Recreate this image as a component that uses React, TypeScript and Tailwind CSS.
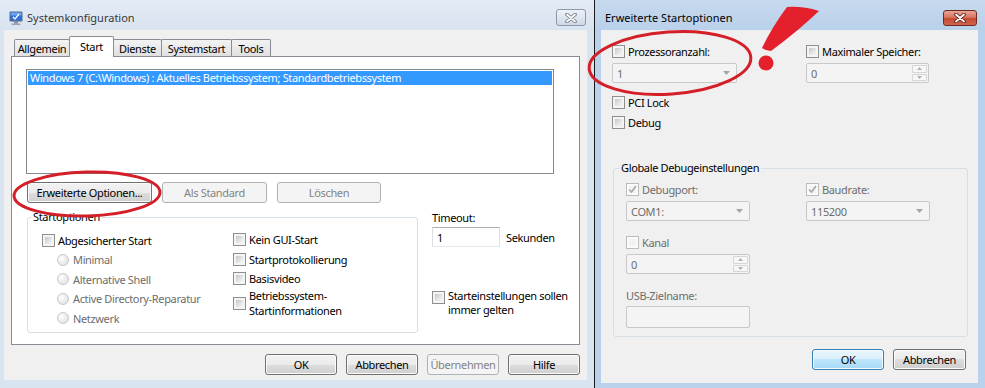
import React from "react";

type CheckProps = { checked?: boolean; disabled?: boolean };

function Check({ checked = false, disabled = false }: CheckProps) {
  return (
    <span
      className={`relative flex w-[13px] h-[13px] shrink-0 border p-[2px] ${
        disabled ? "border-[#bcbcbc] bg-[#fbfbfb]" : "border-[#8e8f8f] bg-[#f4f4f4]"
      }`}
    >
      <span
        className={`flex-1 ${
          disabled
            ? "bg-[#f2f2f2]"
            : "bg-[linear-gradient(135deg,#c3c6cb_0%,#dfe1e4_50%,#f6f6f6_100%)]"
        }`}
      />
      {checked && (
        <svg className="absolute left-[1px] top-[1px]" width="9" height="9" viewBox="0 0 9 9">
          <path d="M1 4.5 L3.5 7 L8 1" fill="none" stroke="#a8a8a8" strokeWidth="1.6" />
        </svg>
      )}
    </span>
  );
}

function Radio() {
  return (
    <span className="w-[12px] h-[12px] shrink-0 rounded-full border border-[#c7c7c7] bg-[radial-gradient(circle_at_35%_35%,#ffffff_0%,#eeeeee_45%,#dcdcdc_100%)]" />
  );
}

function Combo({ value, className }: { value: string; className: string }) {
  return (
    <div
      className={`${className} h-[20px] flex items-center border border-[#c9c9c9] rounded-[2px] bg-[#f4f4f4] pl-[4px] pr-[6px] text-[#6d6d6d]`}
    >
      <span className="flex-1">{value}</span>
      <svg width="7" height="4" viewBox="0 0 7 4">
        <path d="M0 0 H7 L3.5 4 Z" fill="#a6a6a6" />
      </svg>
    </div>
  );
}

function Spin({ value, className }: { value: string; className: string }) {
  return (
    <div
      className={`${className} h-[20px] flex items-center border border-[#c9c9c9] rounded-[2px] bg-[#f4f4f4] pl-[4px] pr-px py-px text-[#6d6d6d]`}
    >
      <span className="flex-1">{value}</span>
      <div className="w-[15px] h-full flex flex-col gap-px">
        <div className="flex-1 flex items-center justify-center border border-[#d6d6d6] rounded-[1px] bg-[#f7f7f7]">
          <svg width="5" height="3" viewBox="0 0 5 3">
            <path d="M0 3 H5 L2.5 0 Z" fill="#b0b0b0" />
          </svg>
        </div>
        <div className="flex-1 flex items-center justify-center border border-[#d6d6d6] rounded-[1px] bg-[#f7f7f7]">
          <svg width="5" height="3" viewBox="0 0 5 3">
            <path d="M0 0 H5 L2.5 3 Z" fill="#b0b0b0" />
          </svg>
        </div>
      </div>
    </div>
  );
}

const btnNormal =
  "flex items-center justify-center border border-[#707070] rounded-[3px] bg-[linear-gradient(#f2f2f2_0%,#ebebeb_50%,#dddddd_50%,#cfcfcf_100%)] shadow-[inset_0_0_0_1px_#fbfbfb] text-black";
const btnDisabled =
  "flex items-center justify-center border border-[#adb2b5] rounded-[3px] bg-[#f4f4f4] text-[#838383]";
const btnDefault =
  "flex items-center justify-center border border-[#3c7fb1] rounded-[3px] bg-[linear-gradient(#eaf6fd_0%,#d9f0fc_50%,#bee6fd_50%,#a7d9f5_100%)] shadow-[inset_0_0_0_1px_#f4fbff] text-black";

function CloseX({ active }: { active: boolean }) {
  return (
    <svg width="12" height="10" viewBox="0 0 12 10">
      <path
        d="M2 1.5 L10 8.5 M10 1.5 L2 8.5"
        stroke={active ? "#5a1f17" : "#6f7784"}
        strokeWidth="3.6"
        strokeLinecap="round"
      />
      <path
        d="M2 1.5 L10 8.5 M10 1.5 L2 8.5"
        stroke="#ffffff"
        strokeWidth="1.8"
        strokeLinecap="round"
      />
    </svg>
  );
}

function AppIcon() {
  return (
    <svg width="16" height="16" viewBox="0 0 16 16" className="shrink-0">
      <rect x="1.5" y="1.5" width="13" height="10" rx="1" fill="#5b6a7e" />
      <rect x="2.5" y="2.5" width="11" height="8" fill="#2f6fd6" />
      <rect x="2.5" y="2.5" width="11" height="3" fill="#6aa3f0" />
      <path d="M5 7 L7 9 L11 4" fill="none" stroke="#ffffff" strokeWidth="1.3" />
      <rect x="6" y="11.5" width="4" height="2" fill="#7c8797" />
      <rect x="3.5" y="13.5" width="9" height="1.5" fill="#9aa4b2" />
    </svg>
  );
}

function Tab({ label, selected, className }: { label: string; selected?: boolean; className: string }) {
  if (selected) {
    return (
      <div
        className={`${className} h-[21px] mb-[-1px] relative z-10 flex justify-center pt-[2px] border border-b-0 border-[#898c95] rounded-t-[2px] bg-white`}
      >
        {label}
      </div>
    );
  }
  return (
    <div
      className={`${className} h-[17px] flex items-center justify-center border border-b-0 border-[#898c95] rounded-t-[2px] bg-[linear-gradient(#f3f3f3,#e0e0e0)] -ml-px first:ml-0`}
    >
      {label}
    </div>
  );
}

function LeftWindow() {
  return (
    <div className="w-[594px] h-full flex flex-col bg-[#d9e4f1]">
      <div className="h-[30px] flex items-center pt-[5px] pl-[8px] pr-[8px] bg-[linear-gradient(#e3ebf5,#d9e4f1)] tracking-normal">
        <AppIcon />
        <span className="ml-[3px] text-[#383838]">Systemkonfiguration</span>
        <div className="ml-auto w-[30px] h-[17px] flex items-center justify-center border border-[#8d98a8] rounded-[3px] bg-[linear-gradient(#eef3f9_0%,#dde5ef_50%,#cfd9e5_100%)]">
          <CloseX active={false} />
        </div>
      </div>
      <div className="ml-[4px] mr-[7px] mb-[8px] flex-1 bg-[#f0f0f0] flex flex-col px-[7px] pt-[6px]">
        <div className="h-[20px] flex items-end pl-[3px]">
          <Tab label="Allgemein" className="w-[56px]" />
          <Tab label="Start" selected className="w-[45px] -ml-px" />
          <Tab label="Dienste" className="w-[49px]" />
          <Tab label="Systemstart" className="w-[71px]" />
          <Tab label="Tools" className="w-[40px]" />
        </div>
        <div className="h-[289px] border border-[#898c95] bg-white flex flex-col">
          <div className="ml-[14px] mt-[12px] w-[528px] h-[105px] border border-[#828790] bg-white p-px">
            <div className="h-[14px] leading-[14px] bg-[#3399ff] text-white pl-[2px] whitespace-nowrap">
              {"Windows 7 (C:\\Windows) : Aktuelles Betriebssystem; Standardbetriebssystem"}
            </div>
          </div>
          <div className="flex gap-[10px] ml-[15px] mt-[8px]">
            <div className={`${btnNormal} w-[125px] h-[21px]`}>Erweiterte Optionen...</div>
            <div className={`${btnDisabled} w-[105px] h-[21px]`}>Als Standard</div>
            <div className={`${btnDisabled} w-[104px] h-[21px]`}>Löschen</div>
          </div>
          <div className="flex mt-[7px] ml-[15px]">
            <fieldset className="w-[391px] border border-[#d5dfe5] rounded-[3px]">
              <legend className="ml-[3px] px-[2px] leading-[14px]">Startoptionen</legend>
              <div className="flex pl-[14px] pt-[6px] pb-[4px]">
                <div className="w-[191px] flex flex-col">
                  <div className="h-[20px] flex items-center gap-[3px]">
                    <Check />
                    <span>Abgesicherter Start</span>
                  </div>
                  <div className="h-[19px] flex items-center gap-[4px] pl-[15px] text-[#6d6d6d]">
                    <Radio />
                    <span>Minimal</span>
                  </div>
                  <div className="h-[20px] flex items-center gap-[4px] pl-[15px] text-[#6d6d6d]">
                    <Radio />
                    <span>Alternative Shell</span>
                  </div>
                  <div className="h-[19px] flex items-center gap-[4px] pl-[15px] text-[#6d6d6d]">
                    <Radio />
                    <span>Active Directory-Reparatur</span>
                  </div>
                  <div className="h-[20px] flex items-center gap-[4px] pl-[15px] text-[#6d6d6d]">
                    <Radio />
                    <span>Netzwerk</span>
                  </div>
                </div>
                <div className="flex flex-col">
                  <div className="h-[19px] flex items-center gap-[3px]">
                    <Check />
                    <span>Kein GUI-Start</span>
                  </div>
                  <div className="h-[20px] flex items-center gap-[3px]">
                    <Check />
                    <span>Startprotokollierung</span>
                  </div>
                  <div className="h-[19px] flex items-center gap-[3px]">
                    <Check />
                    <span>Basisvideo</span>
                  </div>
                  <div className="h-[30px] flex items-center gap-[3px]">
                    <Check />
                    <span>
                      Betriebssystem-
                      <br />
                      Startinformationen
                    </span>
                  </div>
                </div>
              </div>
            </fieldset>
            <div className="ml-[14px] flex flex-col">
              <span>Timeout:</span>
              <div className="mt-[2px] flex items-center">
                <div className="w-[68px] h-[20px] border border-[#abadb3] border-l-[#dbdfe6] border-r-[#dbdfe6] border-b-[#e3e9ef] bg-white flex items-center pl-[4px]">
                  1
                </div>
                <span className="ml-[6px]">Sekunden</span>
              </div>
              <div className="mt-[42px] flex items-start gap-[3px]">
                <span className="mt-[2px]">
                  <Check />
                </span>
                <span className="leading-[14px]">
                  Starteinstellungen sollen
                  <br />
                  immer gelten
                </span>
              </div>
            </div>
          </div>
        </div>
        <div className="flex justify-end gap-[9px] mt-[9px]">
          <div className={`${btnNormal} w-[72px] h-[21px]`}>OK</div>
          <div className={`${btnNormal} w-[72px] h-[21px]`}>Abbrechen</div>
          <div className={`${btnDisabled} w-[72px] h-[21px]`}>Übernehmen</div>
          <div className={`${btnNormal} w-[72px] h-[21px]`}>Hilfe</div>
        </div>
      </div>
    </div>
  );
}

function RightWindow() {
  return (
    <div className="flex-1 h-full flex flex-col bg-[#b9d1ea]">
      <div className="h-[30px] flex items-center pt-[5px] pl-[10px] pr-[8px] bg-[linear-gradient(#c6d9ee,#b9d1ea)] tracking-normal">
        <span className="text-black">Erweiterte Startoptionen</span>
        <div className="ml-auto w-[34px] h-[16px] flex items-center justify-center border border-[#6e2a22] rounded-[3px] bg-[linear-gradient(#e8a595_0%,#d9745f_45%,#c54a33_55%,#d0664c_100%)]">
          <CloseX active />
        </div>
      </div>
      <div className="ml-[6px] mr-[7px] mb-[5px] flex-1 bg-[#f0f0f0] flex flex-col pl-[11px] pt-[13px]">
        <div className="flex h-[16px] items-center">
          <div className="w-[194px] flex items-center gap-[3px]">
            <Check />
            <span>Prozessoranzahl:</span>
          </div>
          <div className="flex items-center gap-[3px]">
            <Check />
            <span>Maximaler Speicher:</span>
          </div>
        </div>
        <div className="flex mt-[4px]">
          <div className="w-[194px]">
            <Combo value="1" className="w-[125px]" />
          </div>
          <Spin value="0" className="w-[123px]" />
        </div>
        <div className="mt-[9px] h-[20px] flex items-center gap-[3px]">
          <Check />
          <span>PCI Lock</span>
        </div>
        <div className="h-[20px] flex items-center gap-[3px]">
          <Check />
          <span>Debug</span>
        </div>
        <fieldset className="mt-[29px] ml-px w-[355px] border border-[#d5dfe5] rounded-[3px]">
          <legend className="ml-[5px] px-[2px] leading-[14px]">Globale Debugeinstellungen</legend>
          <div className="flex flex-col pl-[12px] pt-[6px] pb-[8px] text-[#6d6d6d]">
            <div className="flex h-[16px] items-center">
              <div className="w-[180px] flex items-center gap-[3px]">
                <Check checked disabled />
                <span>Debugport:</span>
              </div>
              <div className="flex items-center gap-[3px]">
                <Check checked disabled />
                <span>Baudrate:</span>
              </div>
            </div>
            <div className="flex mt-[4px]">
              <div className="w-[180px]">
                <Combo value="COM1:" className="w-[124px]" />
              </div>
              <Combo value="115200" className="w-[124px]" />
            </div>
            <div className="mt-[13px] h-[16px] flex items-center gap-[3px]">
              <Check disabled />
              <span>Kanal</span>
            </div>
            <div className="mt-[4px]">
              <Spin value="0" className="w-[124px]" />
            </div>
            <div className="mt-[13px] h-[16px] flex items-center">USB-Zielname:</div>
            <div className="mt-[3px] w-[124px] h-[22px] border border-[#c9c9c9] rounded-[2px] bg-[#f4f4f4]" />
          </div>
        </fieldset>
        <div className="flex justify-end gap-[9px] mt-[12px] pr-[12px]">
          <div className={`${btnDefault} w-[72px] h-[21px]`}>OK</div>
          <div className={`${btnNormal} w-[73px] h-[21px]`}>Abbrechen</div>
        </div>
      </div>
    </div>
  );
}

function Annotations() {
  return (
    <svg
      width="985"
      height="388"
      viewBox="0 0 985 388"
      className="absolute left-0 top-0 pointer-events-none"
    >
      <ellipse
        cx="87"
        cy="194"
        rx="73"
        ry="22"
        transform="rotate(-1.5 87 194)"
        fill="none"
        stroke="#d41f28"
        strokeWidth="3"
      />
      <ellipse
        cx="670"
        cy="63"
        rx="81"
        ry="31"
        transform="rotate(-4 670 63)"
        fill="none"
        stroke="#d41f28"
        strokeWidth="3"
      />
      <path
        d="M787 7 Q803 6 819 11 Q798 31 771 51 Q766 51 762 48 Q772 27 787 7 Z"
        fill="#e3202b"
      />
      <circle cx="766" cy="63" r="7.5" fill="#e3202b" />
    </svg>
  );
}

export default function App() {
  return (
    <div className="relative flex w-[985px] h-[388px] overflow-hidden font-['Noto_Sans',sans-serif] text-[11px] leading-[15px] tracking-[-0.35px] text-black">
      <LeftWindow />
      <div className="w-px h-full bg-[#1b1b1b]" />
      <RightWindow />
      <Annotations />
    </div>
  );
}
